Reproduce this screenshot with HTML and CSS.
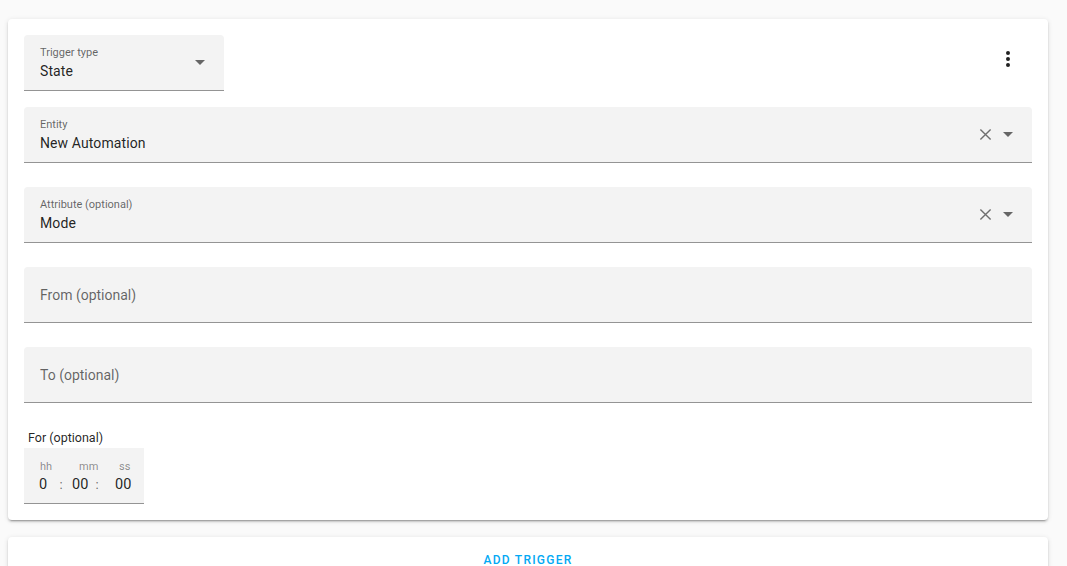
FILE: index.html
```html
<!DOCTYPE html>
<html>
<head>
<meta charset="utf-8">
<link rel="stylesheet" href="styles.css">
</head>
<body>
<div class="page">
  <div class="card">
    <div class="top-row">
      <div class="field select small">
        <div class="field-text">
          <div class="label">Trigger type</div>
          <div class="value">State</div>
        </div>
        <svg class="arrow" width="10" height="5" viewBox="0 0 10 5"><path d="M0 0L5 5L10 0Z" fill="#666"/></svg>
      </div>
      <div class="kebab">
        <svg width="24" height="24" viewBox="0 0 24 24"><path d="M12,16A2,2 0 0,1 14,18A2,2 0 0,1 12,20A2,2 0 0,1 10,18A2,2 0 0,1 12,16M12,10A2,2 0 0,1 14,12A2,2 0 0,1 12,14A2,2 0 0,1 10,12A2,2 0 0,1 12,10M12,4A2,2 0 0,1 14,6A2,2 0 0,1 12,8A2,2 0 0,1 10,6A2,2 0 0,1 12,4Z" fill="#212121"/></svg>
      </div>
    </div>
    <div class="field">
      <div class="field-text">
        <div class="label">Entity</div>
        <div class="value">New Automation</div>
      </div>
      <svg class="clear" width="14" height="14" viewBox="0 0 14 14"><path d="M1.5 1.5L12.5 12.5M12.5 1.5L1.5 12.5" stroke="#6e6e6e" stroke-width="1.5"/></svg>
      <svg class="arrow" width="10" height="5" viewBox="0 0 10 5"><path d="M0 0L5 5L10 0Z" fill="#666"/></svg>
    </div>
    <div class="field">
      <div class="field-text">
        <div class="label">Attribute (optional)</div>
        <div class="value">Mode</div>
      </div>
      <svg class="clear" width="14" height="14" viewBox="0 0 14 14"><path d="M1.5 1.5L12.5 12.5M12.5 1.5L1.5 12.5" stroke="#6e6e6e" stroke-width="1.5"/></svg>
      <svg class="arrow" width="10" height="5" viewBox="0 0 10 5"><path d="M0 0L5 5L10 0Z" fill="#666"/></svg>
    </div>
    <div class="field empty">
      <div class="placeholder">From (optional)</div>
    </div>
    <div class="field empty">
      <div class="placeholder">To (optional)</div>
    </div>
    <div class="for-label">For (optional)</div>
    <div class="time">
      <div class="tcol hh"><span class="tl">hh</span><span class="tv">0</span></div>
      <span class="colon c1">:</span>
      <div class="tcol mm"><span class="tl">mm</span><span class="tv">00</span></div>
      <span class="colon c2">:</span>
      <div class="tcol ss"><span class="tl">ss</span><span class="tv">00</span></div>
    </div>
  </div>
  <div class="card add">
    <div class="add-btn">ADD TRIGGER</div>
  </div>
</div>
</body>
</html>
```
FILE: styles.css
```css
html, body {
  margin: 0;
  padding: 0;
  background: #fafafa;
  font-family: Roboto, "Liberation Sans", sans-serif;
  color: rgba(0,0,0,0.87);
  overflow: hidden;
}
.page {
  padding: 19px 19px 0 8px;
  display: flex;
  flex-direction: column;
  gap: 17px;
}
.card {
  background: #fff;
  border-radius: 4px;
  box-shadow: 0 2px 2px 0 rgba(0,0,0,0.14), 0 1px 5px 0 rgba(0,0,0,0.12), 0 3px 1px -2px rgba(0,0,0,0.2);
  padding: 16px;
  display: flex;
  flex-direction: column;
}
.top-row {
  display: flex;
  justify-content: space-between;
  align-items: flex-start;
  margin-bottom: 16px;
}
.kebab {
  width: 24px;
  height: 24px;
  margin-top: 12px;
  margin-right: 12px;
}
.field {
  height: 55px;
  background: #f3f3f3;
  border-radius: 4px 4px 0 0;
  border-bottom: 1px solid #949494;
  display: flex;
  align-items: center;
  padding: 0 16px;
  margin-bottom: 24px;
}
.top-row .field { margin-bottom: 0; }
.field.small { width: 168px; }
.field-text {
  flex: 1;
  align-self: flex-start;
  padding-top: 11px;
}
.label {
  font-size: 11px;
  line-height: 14px;
  height: 14px;
  color: rgba(0,0,0,0.6);
}
.value {
  font-size: 14px;
  line-height: 20px;
  margin-top: 1px;
  letter-spacing: 0.1px;
}
.arrow {
  margin-left: 11px;
  margin-right: 3px;
  flex: none;
}
.clear { flex: none; width: 13px; height: 13px; }
.placeholder {
  font-size: 14px;
  line-height: 20px;
  color: rgba(0,0,0,0.6);
}
.for-label {
  font-size: 12.5px;
  line-height: 16px;
  margin: 3px 0 2px 4px;
}
.time {
  width: 120px;
  height: 56px;
  box-sizing: border-box;
  background: #f3f3f3;
  border-bottom: 1px solid #949494;
  display: flex;
  align-items: flex-start;
  padding-top: 12px;
}
.tcol {
  display: flex;
  flex-direction: column;
  align-items: flex-start;
  flex: none;
}
.tl {
  font-size: 11px;
  line-height: 14px;
  color: rgba(0,0,0,0.45);
}
.tv {
  font-size: 14.5px;
  line-height: 20px;
  margin-top: 1px;
}
.colon {
  font-size: 13px;
  line-height: 20px;
  color: rgba(0,0,0,0.6);
  margin-top: 15px;
  width: 4px;
  text-align: center;
  flex: none;
}
.hh { width: 12px; margin-left: 15px; }
.hh .tl { margin-left: 1px; }
.c1 { margin-left: 8px; }
.mm { width: 23px; margin-left: 9px; }
.mm .tl { margin-left: 7px; }
.c2 { margin-left: 0; }
.ss { width: 16px; margin-left: 16px; }
.ss .tl { margin-left: 4px; }
.add { padding: 15px 16px 0 16px; height: 40px; }
.add-btn {
  text-align: center;
  color: #03a9f4;
  font-size: 12px;
  font-weight: 500;
  letter-spacing: 1.25px;
  line-height: 16px;
}
```
